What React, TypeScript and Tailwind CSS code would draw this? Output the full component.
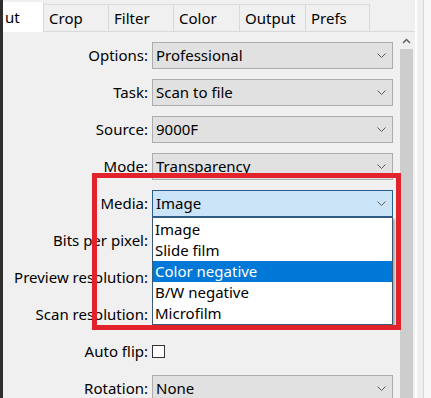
import React from "react";

const Chevron = () => (
  <svg width="9" height="5" viewBox="0 0 9 5" className="shrink-0">
    <path d="M0.5 0.5 L4.5 4.5 L8.5 0.5" fill="none" stroke="#5a5a5a" strokeWidth="1" />
  </svg>
);

function Combo({ value, active }: { value?: string; active?: boolean }) {
  return (
    <div
      className={
        active
          ? "flex items-center h-[27px] w-[241px] border border-[#2a5d8f] bg-[#cce4f7] pl-[3px] pr-[6px]"
          : "flex items-center h-[27px] w-[241px] border border-[#adadad] bg-[#e1e1e1] pl-[3px] pr-[6px]"
      }
    >
      <span className="flex-1 text-[15px] leading-none text-black">{value}</span>
      <Chevron />
    </div>
  );
}

function Row({ label, children }: { label: string; children: React.ReactNode }) {
  return (
    <div className="flex items-center h-[27px]">
      <div className="w-[145px] text-right text-[15px] leading-none text-black whitespace-nowrap">{label}</div>
      <div className="ml-[4px]">{children}</div>
    </div>
  );
}

const tabs = [
  { t: "Crop", w: "w-[65px]" },
  { t: "Filter", w: "w-[65px]" },
  { t: "Color", w: "w-[66px]" },
  { t: "Output", w: "w-[66px]" },
  { t: "Prefs", w: "w-[64px]" },
];

export default function App() {
  return (
    <div className="relative w-[431px] h-[398px] overflow-hidden bg-[#f0f0f0] flex font-['Noto_Sans',sans-serif]">
      <div className="w-[3px] shrink-0 bg-[#2e2e2e]" />
      <div className="w-[412px] shrink-0 flex flex-col">
        <div className="h-[32px] flex items-end shrink-0">
          <div className="w-[41px] h-[30px] bg-white border-r border-[#d9d9d9] flex items-center pl-[2px] text-[15px] leading-none">
            ut
          </div>
          {tabs.map((x) => (
            <div
              key={x.t}
              className={`${x.w} h-[28px] border-t border-r border-b border-[#d9d9d9] flex items-center pl-[5px] text-[15px] leading-none text-black`}
            >
              {x.t}
            </div>
          ))}
          <div className="flex-1 h-[1px] bg-[#d9d9d9]" />
        </div>
        <div className="flex-1 flex">
          <div className="w-[395px] flex flex-col gap-[10px] pt-[10px]">
            <Row label="Options:"><Combo value="Professional" /></Row>
            <Row label="Task:"><Combo value="Scan to file" /></Row>
            <Row label="Source:"><Combo value="9000F" /></Row>
            <Row label="Mode:"><Combo value="Transparency" /></Row>
            <Row label="Media:"><Combo value="Image" active /></Row>
            <Row label="Bits per pixel:"><Combo /></Row>
            <Row label="Preview resolution:"><Combo /></Row>
            <Row label="Scan resolution:"><Combo /></Row>
            <Row label="Auto flip:">
              <div className="w-[13px] h-[13px] border border-[#333] bg-white" />
            </Row>
            <Row label="Rotation:"><Combo value="None" /></Row>
          </div>
          <div className="w-[17px] flex flex-col bg-[#f0f0f0]">
            <div className="h-[17px] flex items-center justify-center">
              <svg width="9" height="6" viewBox="0 0 9 6">
                <path d="M1 5 L4.5 1.5 L8 5" fill="none" stroke="#606060" strokeWidth="1.5" />
              </svg>
            </div>
            <div className="flex-1 mx-[2px] bg-[#cdcdcd]" />
          </div>
        </div>
      </div>
      <div className="w-[16px] shrink-0 flex border-l-2 border-white">
        <div className="w-[6px] bg-[#f0f0f0]" />
        <div className="w-[1px] bg-[#d6d6d6]" />
        <div className="flex-1 bg-[#f7f7f7]" />
      </div>

      <div className="absolute left-[152px] top-[217px] w-[241px] h-[108px] border border-[#3b5a78] bg-white pt-[1px] shadow-[2px_2px_2px_rgba(0,0,0,0.3)]">
        {["Image", "Slide film", "Color negative", "B/W negative", "Microfilm"].map((o) => (
          <div
            key={o}
            className={
              o === "Color negative"
                ? "h-[21px] flex items-center pl-[2px] text-[15px] leading-none bg-[#0078d7] text-white"
                : "h-[21px] flex items-center pl-[2px] text-[15px] leading-none text-black"
            }
          >
            {o}
          </div>
        ))}
      </div>
      <div className="absolute left-[92px] top-[173px] w-[309px] h-[157px] border-[5px] border-[#e3232b]" />
    </div>
  );
}
